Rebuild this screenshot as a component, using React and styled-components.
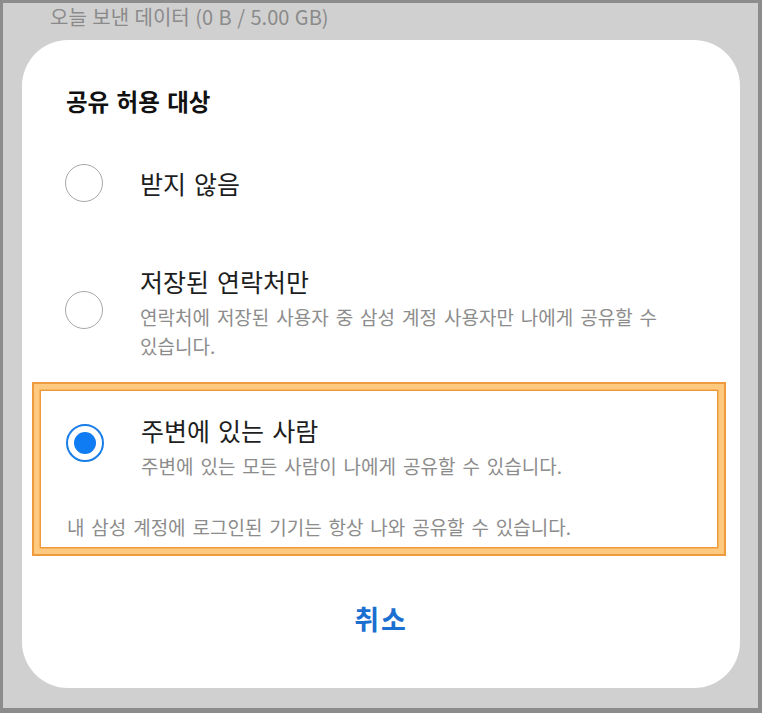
import React from 'react';
import styled, { createGlobalStyle } from 'styled-components';

const GlobalStyle = createGlobalStyle`
  html, body {
    margin: 0;
    padding: 0;
    height: 100%;
  }
  body {
    font-family: 'Noto Sans CJK KR', 'Noto Sans', sans-serif;
    background: #cfcfcf;
  }
`;

const Frame = styled.div`
  box-sizing: border-box;
  width: 762px;
  height: 713px;
  border: 3px solid #8c8c8c;
  border-right-width: 4px;
  border-bottom-width: 5px;
  background: #d0d0d0;
  padding: 0 18px 0 19px;
  overflow: hidden;
`;

const BehindText = styled.div`
  height: 37px;
  padding-left: 28px;
  font-size: 20px;
  line-height: 27px;
  color: #8a8a8a;
  word-spacing: 1px;
`;

const Card = styled.div`
  box-sizing: border-box;
  height: 648px;
  background: #fff;
  border-radius: 46px;
  padding: 45px 44px 0 44px;
  display: flex;
  flex-direction: column;
`;

const Title = styled.h2`
  margin: 0 0 47px;
  font-size: 23.5px;
  font-weight: 700;
  line-height: 32px;
  color: #111;
  word-spacing: 2px;
`;

const Option = styled.div`
  display: flex;
  align-items: center;
  gap: 37px;
  min-height: 38px;
  margin-top: ${p => p.$gap || 0}px;
`;

const Radio = styled.span`
  box-sizing: border-box;
  flex: none;
  width: 38px;
  height: 38px;
  margin-left: -1px;
  margin-top: ${p => p.$shift || 0}px;
  border-radius: 50%;
  border: ${p => (p.$checked ? '2.5px solid #1a7ee6' : '1.6px solid #a8a8a8')};
  display: flex;
  align-items: center;
  justify-content: center;

  &::after {
    content: '';
    display: ${p => (p.$checked ? 'block' : 'none')};
    width: 22px;
    height: 22px;
    border-radius: 50%;
    background: #0f7cf4;
  }
`;

const Texts = styled.div`
  display: flex;
  flex-direction: column;
`;

const Label = styled.div`
  font-size: 25px;
  line-height: 32px;
  color: #1e1e1e;
  word-spacing: 2.5px;
`;

const Desc = styled.div`
  max-width: 540px;
  font-size: 19px;
  line-height: 29px;
  margin-top: 4.5px;
  color: #8c8c8c;
  word-spacing: 2.7px;
  word-break: keep-all;
`;

const Highlight = styled.div`
  margin: 22.5px -30px 0 -34px;
  height: 174px;
  flex: none;
  box-sizing: border-box;
  border: 2px solid #ef9b3d;
  box-shadow: inset 0 0 0 5.5px #ffca80, inset 0 0 0 7px #ef9b3d;
  padding: 30px 0 0 33px;
  display: flex;
  flex-direction: column;
`;

const Note = styled.div`
  margin-top: 32px;
  font-size: 19px;
  line-height: 29px;
  color: #8c8c8c;
  word-spacing: 2.6px;
`;

const CancelButton = styled.button`
  align-self: center;
  margin-top: 45px;
  padding: 0;
  border: none;
  background: none;
  font-family: inherit;
  font-size: 27px;
  font-weight: 700;
  line-height: 36px;
  color: #1a6fd0;
  letter-spacing: 2px;
`;

export default function App() {
  return (
    <>
      <GlobalStyle />
      <Frame>
        <BehindText>오늘 보낸 데이터 (0 B / 5.00 GB)</BehindText>
        <Card>
          <Title>공유 허용 대상</Title>
          <Option>
            <Radio />
            <Texts>
              <Label>받지 않음</Label>
            </Texts>
          </Option>
          <Option $gap={63}>
            <Radio $shift={-4} />
            <Texts>
              <Label>저장된 연락처만</Label>
              <Desc>연락처에 저장된 사용자 중 삼성 계정 사용자만 나에게 공유할 수 있습니다.</Desc>
            </Texts>
          </Option>
          <Highlight>
            <Option>
              <Radio $checked $shift={-8} />
              <Texts>
                <Label>주변에 있는 사람</Label>
                <Desc>주변에 있는 모든 사람이 나에게 공유할 수 있습니다.</Desc>
              </Texts>
            </Option>
            <Note>내 삼성 계정에 로그인된 기기는 항상 나와 공유할 수 있습니다.</Note>
          </Highlight>
          <CancelButton>취소</CancelButton>
        </Card>
      </Frame>
    </>
  );
}
